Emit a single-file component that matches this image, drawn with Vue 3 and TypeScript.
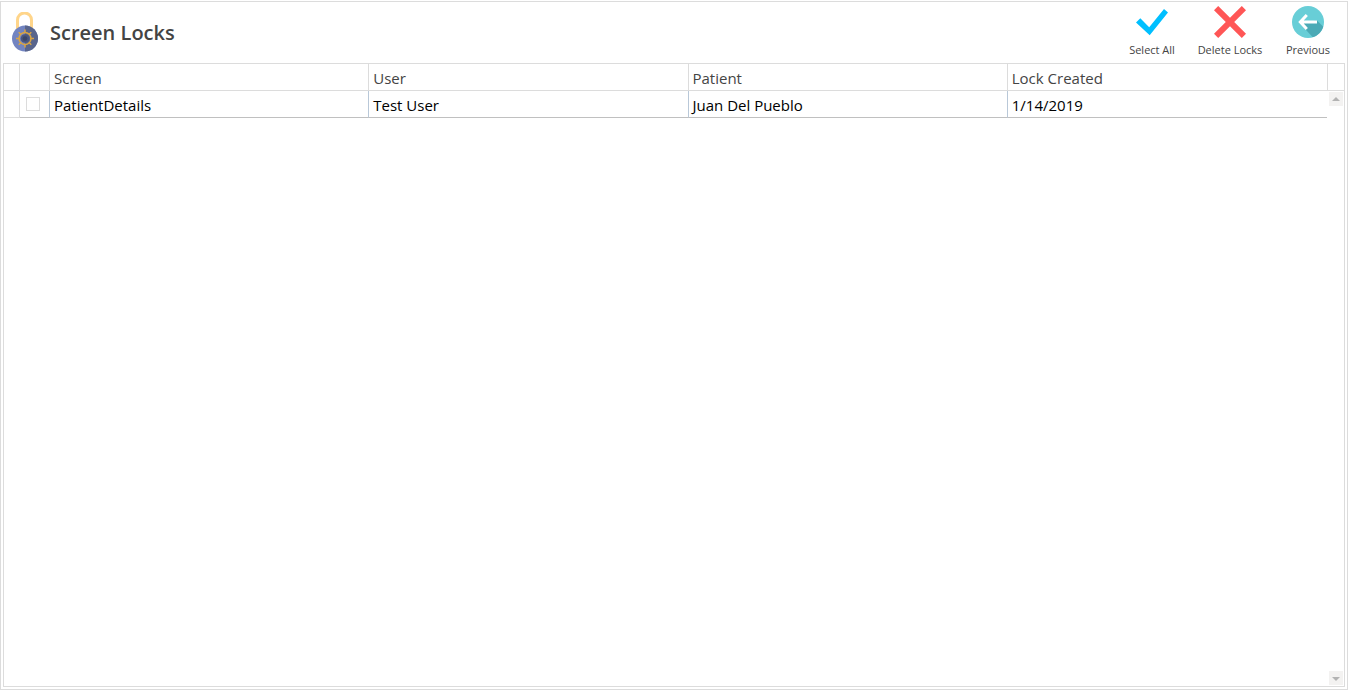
<script setup lang="ts">
import { ref } from 'vue'

interface LockRow {
  id: number
  screen: string
  user: string
  patient: string
  created: string
  selected: boolean
}

const rows = ref<LockRow[]>([
  { id: 1, screen: 'PatientDetails', user: 'Test User', patient: 'Juan Del Pueblo', created: '1/14/2019', selected: false },
])

function selectAll(): void {
  rows.value.forEach((row) => { row.selected = true })
}

function deleteLocks(): void {
  rows.value = rows.value.filter((row) => !row.selected)
}

function goBack(): void {
  window.history.back()
}
</script>

<template>
  <div class="page">
    <main class="window">
      <header class="header">
        <svg class="logo" viewBox="0 0 28 40" aria-hidden="true">
          <path d="M6.5 18V8a7 7 0 0 1 14 0v10" fill="none" stroke="#ffd58a" stroke-width="3" />
          <circle cx="14" cy="26.500" r="13" fill="#7284c1" />
          <path d="M14 13.500a13 13 0 0 1 0 26z" fill="#59658c" />
          <g fill="none" stroke="#d9a443" stroke-width="1.500">
            <circle cx="14" cy="26.500" r="6" />
            <path d="M14 17.500v3.500M14 32v3.500M5 26.500h3.500M19.500 26.500h3.500M7.700 20.200l2.300 2.300M18 30.500l2.300 2.300M20.300 20.200l-2.300 2.300M10 30.500l-2.300 2.300" />
          </g>
          <circle cx="14" cy="26.500" r="4.300" fill="#4a567d" />
          <circle cx="14" cy="26.500" r="2.300" fill="#3b4668" />
        </svg>
        <h1 class="title">Screen Locks</h1>
        <nav class="actions" aria-label="Lock actions">
          <button type="button" class="action" @click="selectAll">
            <svg viewBox="0 0 32 32" aria-hidden="true">
              <path d="M0 16.500L4.300 12.300L13.200 21.200L28 3L32 6.500L13.700 29.300Z" fill="#00bfff" />
            </svg>
            <span>Select All</span>
          </button>
          <button type="button" class="action" @click="deleteLocks">
            <svg viewBox="0 0 32 32" aria-hidden="true">
              <path d="M4.200 0L16 11.800L27.800 0L32 4.200L20.200 16L32 27.800L27.800 32L16 20.200L4.200 32L0 27.800L11.800 16L0 4.200Z" fill="#ff5656" />
            </svg>
            <span>Delete Locks</span>
          </button>
          <button type="button" class="action" @click="goBack">
            <svg viewBox="0 0 32 32" aria-hidden="true">
              <circle cx="16" cy="16" r="16" fill="#68ced7" />
              <path d="M7.500 17L20.800 31.200A16 16 0 0 0 31.300 20.700L25 14.500L13 16Z" fill="#4baab6" />
              <path d="M14.800 9L8.300 16L14.800 23M8.500 16H25" fill="none" stroke="#fff" stroke-width="3" />
            </svg>
            <span>Previous</span>
          </button>
        </nav>
      </header>

      <section class="grid">
        <div class="content">
          <table class="locks">
            <colgroup>
              <col class="col-marker">
              <col class="col-check">
              <col><col><col><col>
            </colgroup>
            <thead>
              <tr>
                <th></th>
                <th></th>
                <th scope="col">Screen</th>
                <th scope="col">User</th>
                <th scope="col">Patient</th>
                <th scope="col">Lock Created</th>
              </tr>
            </thead>
            <tbody>
              <tr v-for="row in rows" :key="row.id">
                <td class="marker"></td>
                <td class="pick">
                  <input v-model="row.selected" type="checkbox" :aria-label="`Select ${row.screen}`">
                </td>
                <td>{{ row.screen }}</td>
                <td>{{ row.user }}</td>
                <td>{{ row.patient }}</td>
                <td>{{ row.created }}</td>
              </tr>
            </tbody>
          </table>
        </div>
        <div class="side">
          <div class="corner"></div>
          <div class="scrollbar">
            <button type="button" class="scroll" aria-label="Scroll up">
              <svg viewBox="0 0 14 14" aria-hidden="true"><path d="M3 9L7 5L11 9Z" /></svg>
            </button>
            <button type="button" class="scroll" aria-label="Scroll down">
              <svg viewBox="0 0 14 14" aria-hidden="true"><path d="M3 6L7 10L11 6Z" /></svg>
            </button>
          </div>
        </div>
      </section>
    </main>
  </div>
</template>

<style>
body {
  margin: 0;
  background: #fff;
}
</style>

<style scoped>
* {
  box-sizing: border-box;
}

.page {
  display: flex;
  height: 100vh;
  padding: 1px 2px 1px 0;
}

.window {
  display: flex;
  flex: 1;
  flex-direction: column;
  min-width: 0;
  border: 1px solid #dcdcdc;
  background: #fff;
  color: #444;
  font-family: "Segoe UI", "Open Sans", "Noto Sans", sans-serif;
}

.header {
  display: flex;
  align-items: center;
  height: 61px;
  flex: none;
  padding-left: 10px;
}

.logo {
  width: 28px;
  height: 40px;
  margin-bottom: 2px;
}

.title {
  margin: 0 0 0 11px;
  font-size: 20px;
  font-weight: 600;
  line-height: 28px;
}

.actions {
  display: flex;
  align-self: flex-start;
  margin-left: auto;
}

.action {
  display: flex;
  flex-direction: column;
  align-items: center;
  gap: 4px;
  width: 78px;
  padding: 4px 0 0;
  border: 0;
  background: none;
  color: inherit;
  font: inherit;
  font-size: 11px;
  line-height: 16px;
  white-space: nowrap;
}

.action svg {
  width: 32px;
  height: 32px;
}

.grid {
  display: flex;
  flex: 1;
  min-height: 0;
  margin: 0 2px 2px;
  border: 1px solid #dcdcdc;
}

.content {
  flex: 1;
  min-width: 0;
}

.locks {
  width: 100%;
  table-layout: fixed;
  border-collapse: separate;
  border-spacing: 0;
  font-size: 15px;
  line-height: 24px;
}

.col-marker {
  width: 16px;
}

.col-check {
  width: 30px;
}

th,
td {
  height: 27px;
  padding: 2px 4px 0;
  border-right: 1px solid #dcdcdc;
  border-bottom: 1px solid #dcdcdc;
  text-align: left;
  font-weight: 400;
  white-space: nowrap;
}

td {
  border-right-color: #b9c8d8;
  border-bottom-color: #c0c0c0;
  color: #000;
}

td.marker {
  border-color: #dcdcdc;
}

th:last-child,
td:last-child {
  border-right: 0;
}

td.pick {
  padding: 0 0 0 6px;
}

.pick input {
  display: block;
  appearance: none;
  width: 14px;
  height: 14px;
  margin: 0;
  border: 1px solid #dcdcdc;
  background: #fff;
}

.pick input:checked {
  background: #00bfff;
}

.side {
  display: flex;
  flex-direction: column;
  width: 17px;
}

.corner {
  height: 27px;
  border-left: 1px solid #dcdcdc;
  border-bottom: 1px solid #dcdcdc;
}

.scrollbar {
  display: flex;
  flex: 1;
  flex-direction: column;
  justify-content: space-between;
  align-items: flex-end;
  padding: 1px;
}

.scroll {
  width: 14px;
  height: 14px;
  padding: 0;
  border: 0;
  background: #f3f2f1;
}

.scroll svg {
  display: block;
  width: 14px;
  height: 14px;
  fill: #b3b3b3;
}
</style>
